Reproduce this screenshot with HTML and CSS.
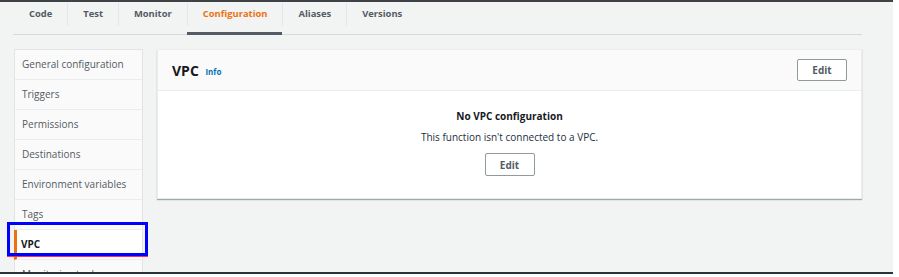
FILE: index.html
```html
<!DOCTYPE html>
<html lang="en">
<head>
    <meta charset="UTF-8">
    <title>Lambda - Configuration - VPC</title>
    <link rel="stylesheet" href="styles.css">
</head>
<body>
    <div class="frame">
        <nav class="tabs">
            <div class="tab"><span class="tab-label">Code</span></div>
            <div class="tab"><span class="tab-label">Test</span></div>
            <div class="tab"><span class="tab-label">Monitor</span></div>
            <div class="tab active"><span class="tab-label">Configuration</span></div>
            <div class="tab"><span class="tab-label">Aliases</span></div>
            <div class="tab"><span class="tab-label">Versions</span></div>
        </nav>

        <div class="layout">
            <ul class="side-nav">
                <li class="side-item">General configuration</li>
                <li class="side-item">Triggers</li>
                <li class="side-item">Permissions</li>
                <li class="side-item">Destinations</li>
                <li class="side-item">Environment variables</li>
                <li class="side-item">Tags</li>
                <li class="side-item selected">
                    VPC
                    <div class="highlight"></div>
                </li>
                <li class="side-item">Monitoring tools</li>
            </ul>

            <section class="panel">
                <div class="panel-header">
                    <h2 class="panel-title">VPC <a class="info-link">Info</a></h2>
                    <button class="btn">Edit</button>
                </div>
                <div class="panel-body">
                    <div class="empty-title">No VPC configuration</div>
                    <div class="empty-text">This function isn't connected to a VPC.</div>
                    <button class="btn">Edit</button>
                </div>
            </section>
        </div>
    </div>
</body>
</html>
```

FILE: styles.css
```css
body {
    margin: 0;
    background-color: #ffffff;
    font-family: 'Open Sans', 'Noto Sans', sans-serif;
    font-size: 10px;
    color: #16191f;
}

.frame {
    width: 893px;
    height: 270px;
    background-color: #f2f3f3;
    border-top: 2px solid #3f4347;
    border-bottom: 2px solid #2a323c;
    overflow: hidden;
}

/* tabs */
.tabs {
    display: flex;
    margin-left: 13px;
    width: 849px;
    height: 32px;
    border-bottom: 1px solid #d5dbdb;
}

.tab {
    padding-top: 1px;
    margin-bottom: -1px;
}

.tab-label {
    display: block;
    padding: 3px 15px 0;
    height: 20px;
    line-height: 16px;
    font-size: 9.4px;
    font-weight: bold;
    color: #545b64;
    border-left: 1px solid #e4e7e7;
}

.tab:first-child .tab-label {
    border-left-color: transparent;
}

.tab.active {
    border-bottom: 3px solid #545b64;
    height: 29px;
}

.tab.active .tab-label {
    color: #ec7211;
}

/* content */
.layout {
    display: flex;
    align-items: flex-start;
    gap: 14px;
    margin: 14px 0 0 14px;
}

.side-nav {
    list-style: none;
    margin: 0;
    padding: 0;
    width: 127px;
    background-color: #fafafa;
    border: 1px solid #e1e4e4;
    border-bottom: none;
}

.side-item {
    height: 29px;
    line-height: 29px;
    padding-left: 7px;
    color: #545b64;
    border-bottom: 1px solid #eaeded;
    white-space: nowrap;
    overflow: hidden;
}

.side-item.selected {
    position: relative;
    overflow: visible;
    background-color: #ffffff;
    color: #16191f;
    font-weight: bold;
    padding-left: 4px;
    border-left: 3px solid #ec7211;
    margin-left: -1px;
}

.highlight {
    position: absolute;
    left: -10px;
    top: -8px;
    width: 135px;
    height: 28px;
    border: 3px solid #0000ff;
    box-shadow: 0 1px 0 #ff2d55;
}

.panel {
    width: 703px;
    background-color: #ffffff;
    border: 1px solid #eaeded;
    box-shadow: 0 1px 1px rgba(0, 28, 36, 0.35);
}

.panel-header {
    display: flex;
    justify-content: space-between;
    align-items: center;
    height: 40px;
    padding: 0 14px 0 14px;
    background-color: #fafafa;
    border-bottom: 1px solid #eaeded;
}

.panel-title {
    margin: 0;
    font-size: 14px;
    font-weight: bold;
    color: #16191f;
}

.info-link {
    font-size: 8px;
    color: #0073bb;
    margin-left: 3px;
    vertical-align: 1px;
}

.btn {
    width: 50px;
    height: 22px;
    padding: 0;
    background-color: #ffffff;
    border: 1px solid #8f9a9b;
    border-radius: 2px;
    font-family: inherit;
    font-size: 10px;
    font-weight: bold;
    color: #545b64;
}

.panel-body {
    display: flex;
    flex-direction: column;
    align-items: center;
    padding: 17px 0 22px;
}

.empty-title {
    font-weight: bold;
    line-height: 16px;
}

.empty-text {
    line-height: 16px;
    margin: 5px 0 8px;
    color: #232f3e;
}

.panel-body .btn {
    height: 23px;
}
```
